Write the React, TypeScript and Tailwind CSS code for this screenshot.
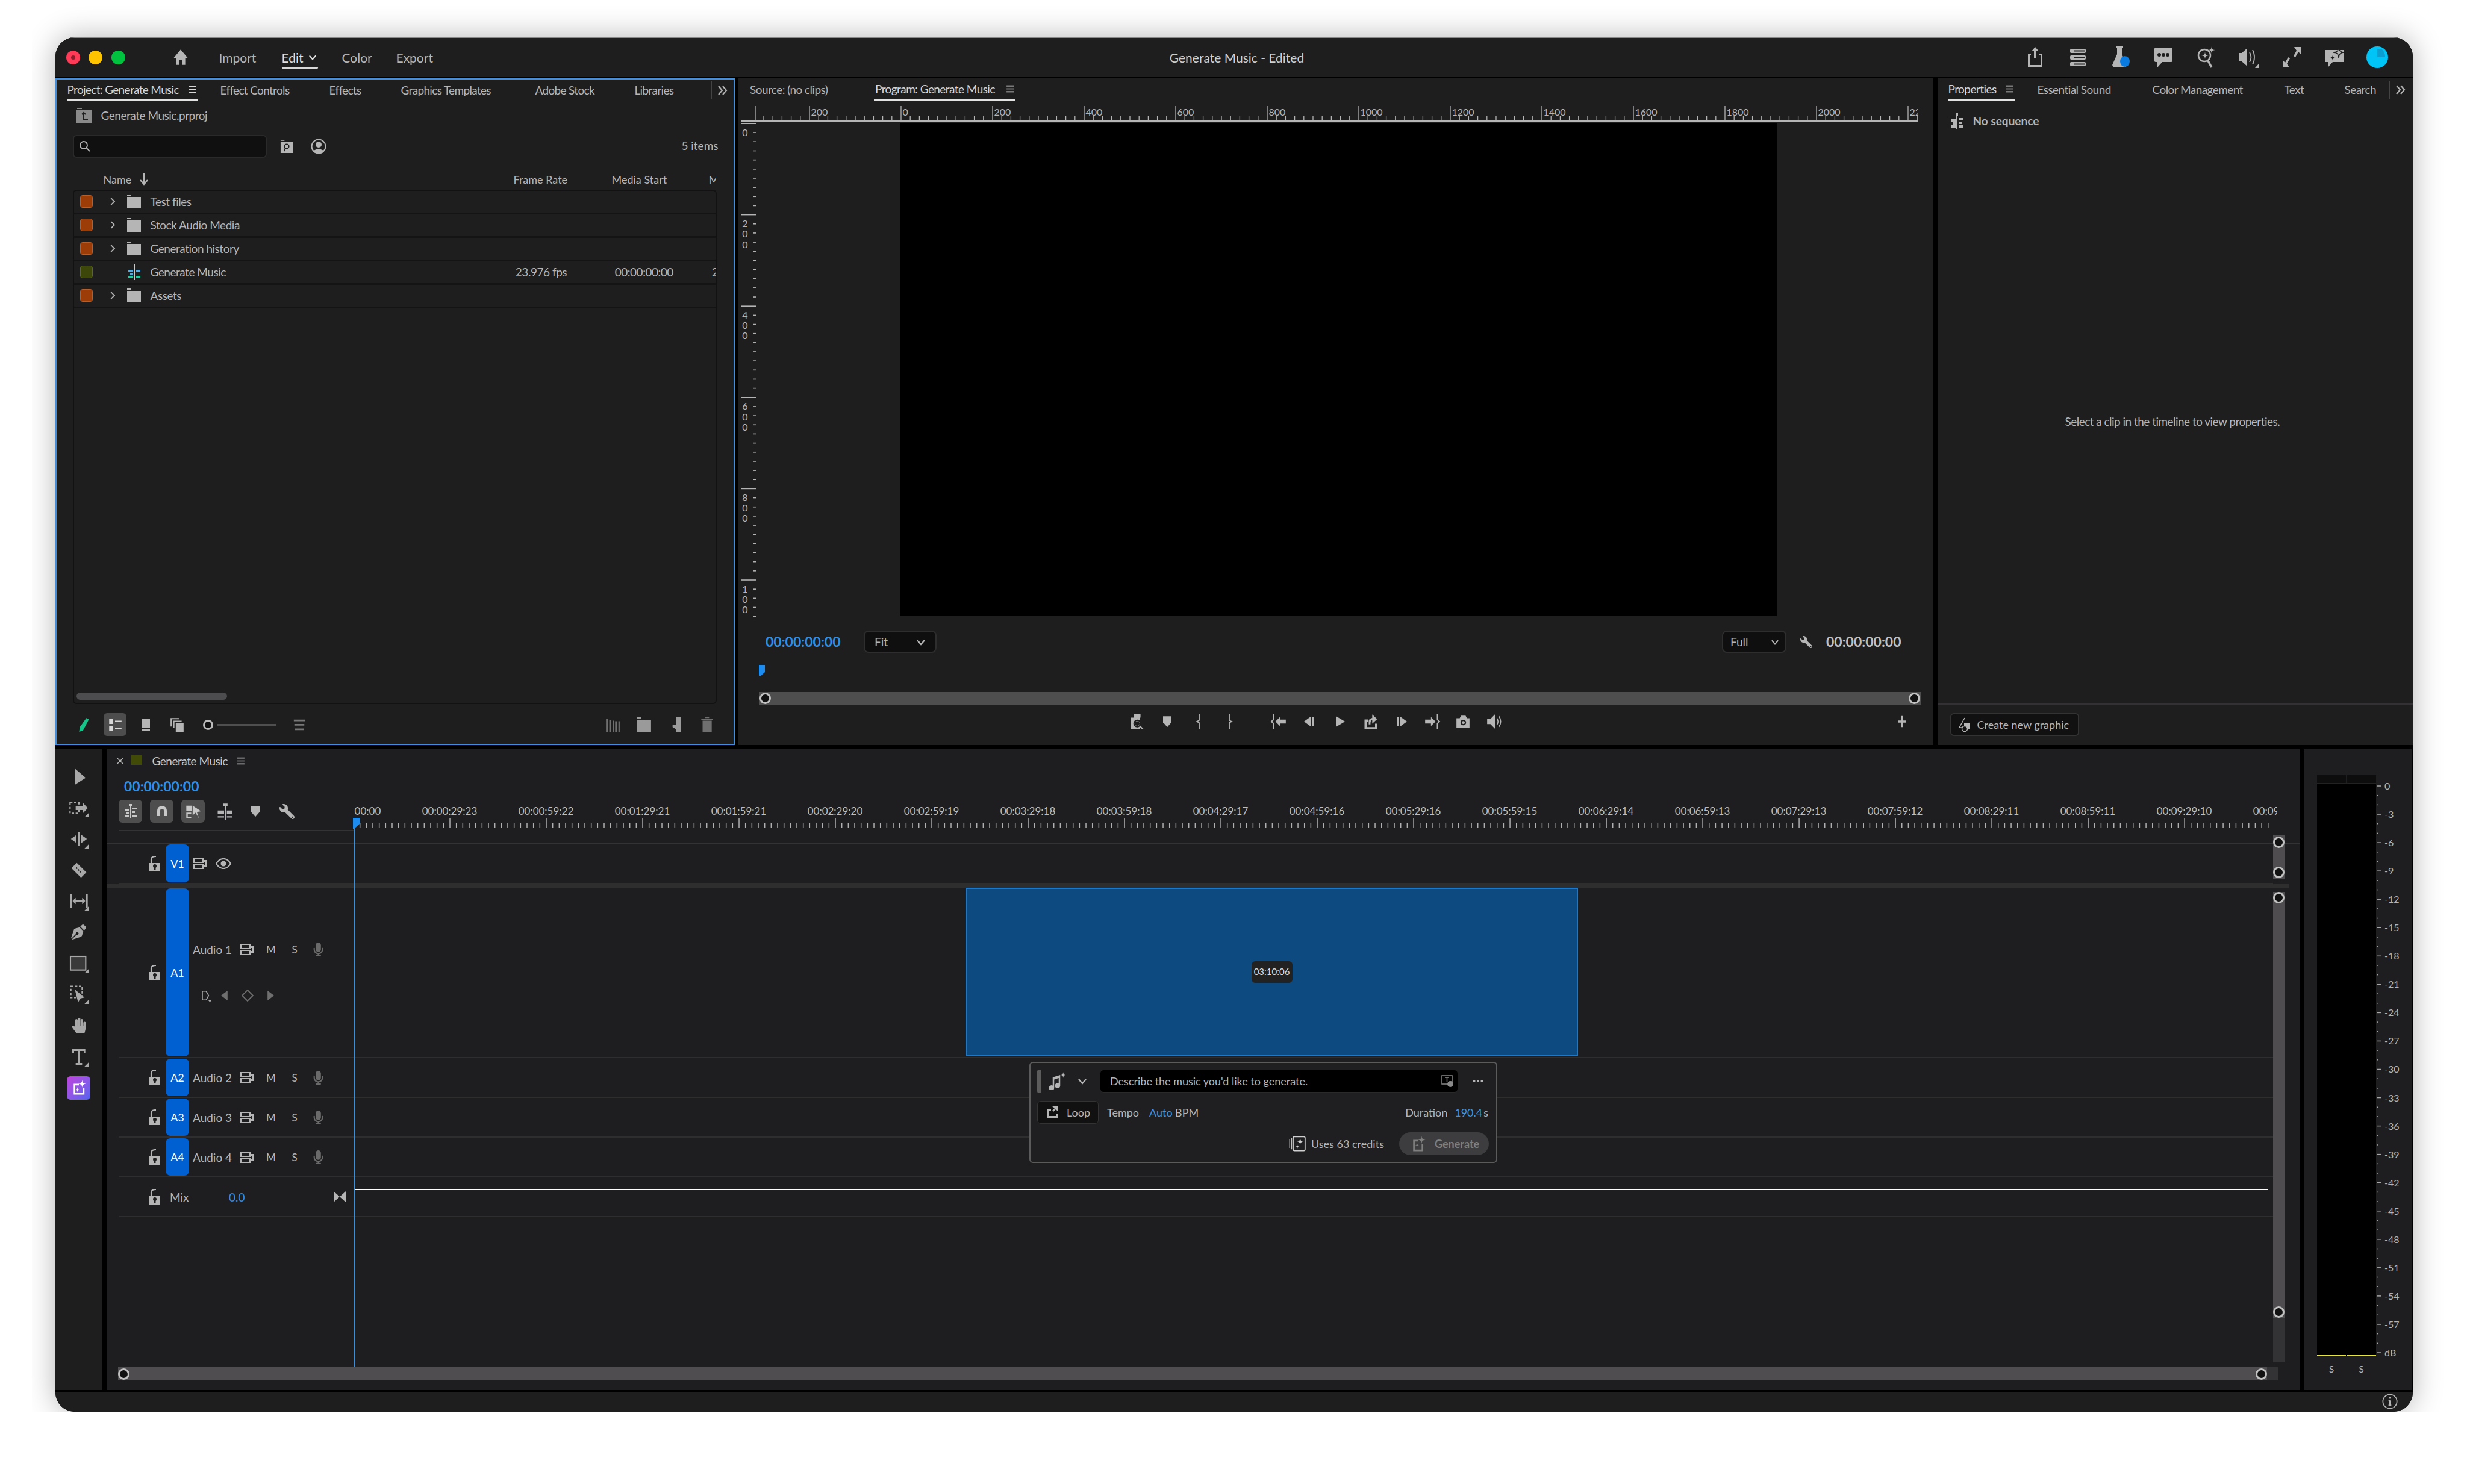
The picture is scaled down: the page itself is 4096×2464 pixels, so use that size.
import React from 'react';
import { FaHandPaper, FaWrench, FaMicrophone, FaPenNib } from 'react-icons/fa';

type P = { s?: number; h?: number; c?: string; vb?: string; children?: React.ReactNode };
const Ic = ({ s = 24, h, c = '', vb = '0 0 24 24', children }: P) => (
  <svg width={s} height={h ?? s} viewBox={vb} fill="currentColor" className={'shrink-0 ' + c}>{children}</svg>
);
const star = (x: number, y: number, r: number) => `M${x} ${y - r}Q${x} ${y} ${x + r} ${y}Q${x} ${y} ${x} ${y + r}Q${x} ${y} ${x - r} ${y}Q${x} ${y} ${x} ${y - r}Z`;
const Corner = () => <path d="M24 19v5h-5z" />;

const Menu = ({ s = 17 }: { s?: number }) => <Ic s={s}><path d="M3 4h18v2.4H3zM3 10.8h18v2.4H3zM3 17.6h18V20H3z" /></Ic>;
const Chev2 = () => <Ic s={20} vb="0 0 20 20"><path d="M3 3l6 7-6 7M10 3l6 7-6 7" fill="none" stroke="currentColor" strokeWidth="2.2" /></Ic>;
const ChevR = () => <Ic s={13} vb="0 0 12 16"><path d="M2 1l7 7-7 7" fill="none" stroke="currentColor" strokeWidth="2.2" /></Ic>;
const ChevD = ({ s = 16 }: { s?: number }) => <Ic s={s} vb="0 0 16 16"><path d="M2 5l6 7 6-7" fill="none" stroke="currentColor" strokeWidth="2.4" /></Ic>;
const Folder = () => <Ic s={23} h={24} vb="0 0 23 24"><path d="M0 0h7v2H0zM0 4h23v19H0z" /></Ic>;
const SeqIcon = () => (
  <Ic s={26} vb="0 0 26 26">
    <rect x="12" y="0" width="2" height="26" fill="#c8c8c8" />
    <rect x="3" y="9" width="8" height="4" fill="#5aa9d8" /><rect x="15" y="9" width="8" height="4" fill="#5aa9d8" />
    <rect x="6" y="14" width="5" height="4" fill="#5aa9d8" />
    <rect x="3" y="19" width="8" height="4" fill="#2ec4a0" /><rect x="15" y="19" width="8" height="4" fill="#2ec4a0" />
  </Ic>
);
const SeqGray = () => (
  <Ic s={26} vb="0 0 26 26">
    <rect x="11" y="1" width="2" height="25" /><rect x="10" y="0" width="4" height="5" />
    <rect x="2" y="10" width="8" height="4" /><rect x="15" y="8" width="8" height="4" /><rect x="5" y="15" width="5" height="4" /><rect x="15" y="14" width="5" height="4" />
    <rect x="2" y="20" width="8" height="4" /><rect x="15" y="20" width="8" height="4" />
  </Ic>
);
const Lock = () => (
  <Ic s={20} h={26} vb="0 0 20 26">
    <path d="M1 12h18v14H1z" /><path d="M4 12V6c0-4 3-5 8-5" fill="none" stroke="currentColor" strokeWidth="2.2" />
    <circle cx="10" cy="17" r="3" fill="#1e1e1f" /><rect x="8.5" y="18" width="3" height="5" fill="#1e1e1f" />
  </Ic>
);
const Sync = () => (
  <Ic s={24} h={19} vb="0 0 24 19">
    <path d="M1 1h15v7H1zM1 11h15v7H1z" fill="none" stroke="currentColor" strokeWidth="2" />
    <path d="M16 4h7v11h-7v-3h3V7h-3z" />
  </Ic>
);
const Eye = () => (
  <Ic s={26} h={18} vb="0 0 26 18">
    <path d="M1 9c3-5 7-8 12-8s9 3 12 8c-3 5-7 8-12 8S4 14 1 9z" fill="none" stroke="currentColor" strokeWidth="2.2" />
    <circle cx="13" cy="9" r="4.5" />
  </Ic>
);
const Marker = ({ s = 16 }: { s?: number }) => <Ic s={s} h={s * 1.15} vb="0 0 16 18"><path d="M1 0h14v10l-7 8-7-8z" /></Ic>;
const Toolbtn = ({ children }: { children: React.ReactNode }) => (
  <div className="w-[39px] h-[38px] rounded-md bg-[#4e4e4e] flex items-center justify-center text-[#c8c8c8]">{children}</div>
);
const SeqSmall = () => (
  <Ic s={26} vb="0 0 26 26">
    <rect x="12" y="1" width="2" height="24" /><rect x="11" y="1" width="4" height="4" />
    <rect x="3" y="9" width="8" height="3" /><rect x="15" y="7" width="8" height="3" /><rect x="6" y="14" width="5" height="3" /><rect x="15" y="13" width="5" height="3" />
    <rect x="3" y="19" width="8" height="3" /><rect x="15" y="19" width="8" height="3" />
  </Ic>
);

const Chip = ({ c }: { c: 'o' | 'g' }) => (
  <div className={c === 'o' ? 'w-[21px] h-[21px] rounded-[4px] bg-[#9c3d08] border border-[#b85f2c] shrink-0' : 'w-[21px] h-[21px] rounded-[4px] bg-[#3d470a] border border-[#5b6a1c] shrink-0'} />
);

const Ring = () => <div className="w-[19px] h-[19px] rounded-full border-[3px] border-[#c2c2c2] bg-[#121212] shrink-0" />;

const rows = [
  { n: 'Test files', c: 'o' as const, f: true },
  { n: 'Stock Audio Media', c: 'o' as const, f: true },
  { n: 'Generation history', c: 'o' as const, f: true },
  { n: 'Generate Music', c: 'g' as const, f: false },
  { n: 'Assets', c: 'o' as const, f: true },
];

function ProjectPanel() {
  return (
    <div className="w-[1128px] h-full border-2 border-[#3f8ee0] bg-[#1e1e1f] flex flex-col">
      <div className="flex h-[37px] pl-[18px] items-start shrink-0 text-[19px] leading-none tracking-[-0.035em] whitespace-nowrap">
        <div className="w-[217px] h-[36px] border-b-[3px] border-[#e2e2e2] flex items-center justify-between pr-[1px] text-[#d6d6d6]"><span>Project: Generate Music</span><Menu /></div>
        <div className="w-[37px]" />
        <div className="w-[181px] h-[36px] flex items-center">Effect Controls</div>
        <div className="w-[119px] h-[36px] flex items-center">Effects</div>
        <div className="w-[223px] h-[36px] flex items-center">Graphics Templates</div>
        <div className="w-[165px] h-[36px] flex items-center">Adobe Stock</div>
        <div className="w-[127px] h-[36px] flex items-center">Libraries</div>
        <div className="w-[1px] h-[30px] mt-[2px] bg-[#444]" />
        <div className="h-[36px] flex items-center ml-[8px]"><Chev2 /></div>
      </div>
      <div className="flex h-[47px] items-center pl-[33px] shrink-0 text-[19px] tracking-[-0.025em]">
        <Ic s={26} vb="0 0 26 26" c="text-[#8a8a8a]"><path d="M1 0h8v2H1zM0 4h26v22H0z" /><path d="M12 8v11h7M9 11l3-3 3 3" stroke="#1e1e1f" strokeWidth="2" fill="none" /></Ic>
        <span className="ml-[15px]">Generate Music.prproj</span>
      </div>
      <div className="flex h-[54px] items-center pl-[27px] pr-[25px] shrink-0 text-[19px]">
        <div className="w-[322px] h-[38px] rounded-md bg-[#101011] border-2 border-[#2a2a2a] flex items-center pl-[8px]">
          <svg width="20" height="20" viewBox="0 0 20 20" fill="none" stroke="currentColor" strokeWidth="1.8"><circle cx="8" cy="8" r="6" /><path d="M12.5 12.5L18 18" /></svg>
        </div>
        <div className="w-[22px] h-[24px] ml-[22px] flex items-center justify-center">
          <Ic s={22} vb="0 0 22 24"><path d="M0 0h7v2H0zM0 4h22v20H0z" /><circle cx="11" cy="12" r="4" fill="none" stroke="#1e1e1f" strokeWidth="2" /><path d="M8 16l-2 5" stroke="#1e1e1f" strokeWidth="2" /></Ic>
        </div>
        <div className="ml-[29px]">
          <Ic s={26} vb="0 0 26 26"><circle cx="13" cy="13" r="11.5" fill="none" stroke="currentColor" strokeWidth="2" /><circle cx="13" cy="10" r="5" /><path d="M4 22c2-6 16-6 18 0-4 4-14 4-18 0z" /></Ic>
        </div>
        <span className="ml-auto">5 items</span>
      </div>
      <div className="flex h-[45px] items-center pl-[78px] pt-[11px] shrink-0 text-[18px] leading-none">
        <div className="w-[681px] flex items-center gap-[14px]"><span>Name</span><Ic s={14} h={20} vb="0 0 14 20"><path d="M7 0v17M1 11l6 7 6-7" fill="none" stroke="currentColor" strokeWidth="2.4" /></Ic></div>
        <div className="w-[163px]">Frame Rate</div>
        <div className="w-[161px]">Media Start</div>
        <div className="w-[12px] overflow-hidden">Media</div>
      </div>
      <div className="ml-[27px] mr-[28px] h-[854px] border-2 border-[#121213] rounded-md flex flex-col shrink-0 overflow-hidden text-[19px] leading-none">
        {rows.map((r) => (
          <div key={r.n} className="h-[39px] shrink-0 border-b-[3px] border-[#141415] flex items-center pl-[10px]">
            <Chip c={r.c} />
            <div className="w-[57px] pl-[27px] flex items-center">{r.f && <ChevR />}</div>
            <div className="w-[39px] flex items-center">{r.f ? <Folder /> : <SeqIcon />}</div>
            <span className="w-[607px] tracking-[-0.025em]">{r.n}</span>
            {!r.f && <><span className="w-[165px] tracking-[-0.025em]">23.976 fps</span><span className="w-[161px] tracking-[-0.025em]">00:00:00:00</span><span className="w-[6px] overflow-hidden">2</span></>}
          </div>
        ))}
        <div className="flex-1" />
        <div className="ml-[4px] mb-[5px] w-[250px] h-[12px] rounded-md bg-[#4d4c4e]" />
      </div>
      <div className="flex flex-1 items-center pl-[19px] pr-[19px] pt-[3px]">
        <div className="w-[52px] flex justify-center text-[#16c388]"><Ic s={26}><path d="M16 2l4 2-9 17-6 2 1-7z" /></Ic></div>
        <div className="w-[52px] flex justify-center"><div className="w-[38px] h-[38px] rounded-md bg-[#4e4d4e] flex items-center justify-center text-[#d8d8d8]"><Ic s={26}><path d="M3 3h6v8H3zM3 14h6v8H3zM12 6h10v2H12zM12 17h10v2H12z" /></Ic></div></div>
        <div className="w-[51px] flex justify-center"><Ic s={24}><path d="M5 2h14v15H5zM5 20h14v2H5z" /></Ic></div>
        <div className="w-[52px] flex justify-center"><Ic s={26}><path d="M2 2h13v2H4v11H2zM6 6h13v2H8v9H6zM10 10h12v13H10z" /></Ic></div>
        <div className="w-[17px] h-[17px] ml-[17px] rounded-full border-[3px] border-[#bdbdbd] bg-[#111] shrink-0" />
        <div className="w-[98px] h-[3px] ml-[6px] bg-[#4f4f4f]" />
        <div className="ml-[28px] text-[#777]"><Ic s={22}><path d="M2 3h20v3H2zM3 11h18v3H3zM4 19h16v3H4z" /></Ic></div>
        <div className="ml-auto flex text-[#6f6f6f]">
          <div className="w-[52px] flex justify-center"><Ic s={26}><path d="M2 3h3v20H2zM7 5h3v18H7zM12 6h2v17h-2zM16 7h3v16h-3zM21 7h2v16h-2z" /></Ic></div>
          <div className="w-[52px] flex justify-center text-[#9a9a9a]"><Ic s={26}><path d="M1 0h7v3H1zM1 5h22v20H1z" /></Ic></div>
          <div className="w-[52px] flex justify-center text-[#9a9a9a]"><Ic s={26}><path d="M8 1h13v24h-8v-6l-5-3V13h5V1z" /></Ic></div>
          <div className="w-[52px] flex justify-center"><Ic s={26}><path d="M6 6h14v19H6zM4 3h18v2H4zM10 0h6v2h-6z" /></Ic></div>
        </div>
      </div>
    </div>
  );
}

const hTicks = Array.from({ length: 127 }, (_, i) => 38 + 15.2 * i).filter((x) => x <= 1955);
const hLabels: [string, number][] = [['200', 114], ...Array.from({ length: 11 }, (_, i): [string, number] => [String(i * 200), 266 + i * 152]), ['22', 1938]];
const vLabels = ['0', '200', '400', '600', '800', '100'];

function ProgramPanel() {
  return (
    <div className="w-[1984px] h-full bg-[#1e1e1f] flex flex-col ml-[6.5px]">
      <div className="flex h-[41px] pl-[19px] items-start shrink-0 text-[19px] leading-none tracking-[-0.03em] whitespace-nowrap">
        <div className="w-[206px] h-[38px] flex items-center">Source: (no clips)</div>
        <div className="w-[235px] h-[38px] border-b-[3px] border-[#e2e2e2] flex items-center justify-between pl-[2px] text-[#d6d6d6]"><span>Program: Generate Music</span><Menu /></div>
      </div>
      <div className="relative h-[34px] ml-[4.4px] w-[1955px] shrink-0 overflow-hidden">
        <svg width="1955" height="34" className="absolute inset-0" stroke="#b5b5b5" strokeWidth="1.3">
          <line x1="0" x2="1955" y1="30" y2="30" strokeWidth="2" />
          <line x1="25" x2="25" y1="5" y2="30" />
          {hTicks.map((x, i) => <line key={i} x1={x} x2={x} y1={(Math.abs(x - 114) < 1 || (x >= 266 && Math.round((x - 266) / 15.2) % 10 === 0)) ? 5 : 22} y2="30" />)}
        </svg>
        {hLabels.map(([t, x], i) => (
          <span key={i} className="absolute top-[7px] text-[16px] leading-none" style={{ left: x + 2 }}>{t}</span>
        ))}
      </div>
      <div className="flex h-[826px] shrink-0 ml-[4.4px] overflow-hidden">
        <div className="relative w-[26px] h-full shrink-0">
          <svg width="26" height="826" className="absolute inset-0" stroke="#b5b5b5" strokeWidth="1.6">
            <line x1="0" x2="26" y1="0" y2="0" strokeWidth="2" />
            {Array.from({ length: 55 }, (_, i) => <line key={i} x1={i % 10 === 0 ? 0 : 21} x2="26" y1={i * 15.16} y2={i * 15.16} />)}
          </svg>
          {vLabels.map((t, i) => (
            <div key={i} className="absolute left-[0px] flex flex-col text-[16px] leading-[17.3px] w-[13px] items-center" style={{ top: 6 + i * 151.6 }}>
              {t.split('').map((d, j) => <span key={j}>{d}</span>)}
            </div>
          ))}
        </div>
        <div className="w-[238.6px] shrink-0" />
        <div className="w-[1456px] h-[817px] bg-black shrink-0" />
      </div>
      <div className="flex h-[70px] items-center shrink-0 pl-[45px] pr-[54px] text-[19px] leading-none">
        <span className="w-[124px] text-[#2f8fe6] font-bold text-[23px] whitespace-nowrap">00:00:00:00</span>
        <div className="ml-[39px] w-[121px] h-[37px] rounded-lg bg-[#0f0f10] border-2 border-[#2e2e2e] flex items-center justify-between pl-[16px] pr-[16px]"><span>Fit</span><ChevD /></div>
        <div className="ml-auto w-[107px] h-[37px] rounded-lg bg-[#0f0f10] border-2 border-[#2e2e2e] flex items-center justify-between pl-[12px] pr-[10px]"><span>Full</span><ChevD s={14} /></div>
        <div className="w-[66px] flex justify-center"><FaWrench size={20} className="-scale-x-100" /></div>
        <span className="w-[124px] font-bold text-[23px] text-[#c0c0c0] whitespace-nowrap">00:00:00:00</span>
      </div>
      <div className="h-[48px] pl-[34px] pt-[3px] shrink-0">
        <Ic s={10} h={19} vb="0 0 10 19" c="text-[#1c8cf0]"><path d="M0 0h10v12l-8 7-2-3z" /></Ic>
      </div>
      <div className="ml-[34px] w-[1929px] h-[21px] bg-[#4f4e4f] flex items-center justify-between shrink-0 px-[1px]"><Ring /><Ring /></div>
      <div className="flex flex-1 items-center pl-[634px] pr-[26px] pb-[10px] text-[#b5b5b5]">
        <div className="w-[52px] flex justify-center"><Ic s={26}><path d="M9 1h10v5H9zM4 6h14v18H4z" /><circle cx="14" cy="15" r="5" fill="#b5b5b5" stroke="#1e1e1f" strokeWidth="2" /><circle cx="14" cy="15" r="3.5" fill="#1e1e1f" /><path d="M18 19l5 5" stroke="#b5b5b5" strokeWidth="2" /></Ic></div>
        <div className="w-[52px] flex justify-center"><Marker /></div>
        <div className="w-[52px] flex justify-center"><Ic s={14} h={26} vb="0 0 14 26"><path d="M8 1v10l-4 2 4 2v10" fill="none" stroke="currentColor" strokeWidth="1.8" /></Ic></div>
        <div className="w-[52px] flex justify-center"><Ic s={14} h={26} vb="0 0 14 26"><path d="M6 1v10l4 2-4 2v10" fill="none" stroke="currentColor" strokeWidth="1.8" /></Ic></div>
        <div className="w-[29px]" />
        <div className="w-[51px] flex justify-center"><Ic s={28} vb="0 0 26 26"><path d="M5 1v9l-3 3 3 3v9" fill="none" stroke="currentColor" strokeWidth="2" /><path d="M8 13l7-7v4h9v6h-9v4z" /></Ic></div>
        <div className="w-[51px] flex justify-center"><Ic s={24}><path d="M3 12l11-8v16zM17 4h3v16h-3z" /></Ic></div>
        <div className="w-[51px] flex justify-center"><Ic s={24}><path d="M5 3l15 9-15 9z" /></Ic></div>
        <div className="w-[51px] flex justify-center"><Ic s={28}><path d="M3 9h5v3H6v8h12v-5h3v8H3z" /><path d="M9 16v-4c0-3 2-5 5-5V2l7 6.500-7 6.500v-5c-2 0-2.500 2-2.500 6z" /></Ic></div>
        <div className="w-[51px] flex justify-center"><Ic s={24}><path d="M4 4h3v16H4zM10 4l11 8-11 8z" /></Ic></div>
        <div className="w-[51px] flex justify-center"><Ic s={28} vb="0 0 26 26"><g transform="matrix(-1 0 0 1 26 0)"><path d="M5 1v9l-3 3 3 3v9" fill="none" stroke="currentColor" strokeWidth="2" /><path d="M8 13l7-7v4h9v6h-9v4z" /></g></Ic></div>
        <div className="w-[51px] flex justify-center"><Ic s={26}><path d="M2 7h5l2-4h7l2 4h4v15H2z" /><circle cx="12.500" cy="13.500" r="3.300" fill="none" stroke="#1e1e1f" strokeWidth="2" /></Ic></div>
        <div className="w-[51px] flex justify-center"><Ic s={26}><path d="M2 8h5l7-7v22l-7-7H2z" /><path d="M17 7c2 3 2 7 0 10M20 4c3.500 5 3.500 11 0 16" fill="none" stroke="currentColor" strokeWidth="1.500" /></Ic></div>
        <div className="ml-auto w-[52px] flex justify-center"><Ic s={22}><path d="M10.5 2h3v8h6v4h-6v8h-3v-8h-6v-4h6z" /></Ic></div>
      </div>
    </div>
  );
}

function PropertiesPanel() {
  return (
    <div className="w-[789px] h-full bg-[#1e1e1f] flex flex-col ml-[6.5px]">
      <div className="flex h-[41px] pl-[18px] items-start shrink-0 text-[19px] leading-none tracking-[-0.03em] whitespace-nowrap">
        <div className="w-[110px] h-[38px] border-b-[3px] border-[#e2e2e2] flex items-center justify-between text-[#d6d6d6]"><span>Properties</span><Menu /></div>
        <div className="w-[38px]" />
        <div className="w-[191px] h-[38px] flex items-center">Essential Sound</div>
        <div className="w-[219px] h-[38px] flex items-center">Color Management</div>
        <div className="w-[100px] h-[38px] flex items-center">Text</div>
        <div className="w-[74px] h-[38px] flex items-center">Search</div>
        <div className="w-[1px] h-[30px] mt-[4px] bg-[#444]" />
        <div className="h-[38px] flex items-center ml-[8px]"><Chev2 /></div>
      </div>
      <div className="h-[61px] flex items-center pl-[20px] shrink-0 text-[19px] font-bold"><SeqGray /><span className="ml-[13px]">No sequence</span></div>
      <div className="flex-1 flex items-center pl-[212px] text-[19px] leading-none tracking-[-0.028em]"><span>Select a clip in the timeline to view properties.</span></div>
      <div className="h-[69px] border-t-2 border-[#333134] flex items-start pl-[21px] pt-[14px] shrink-0">
        <div className="w-[214px] h-[38px] rounded-md bg-[#111112] border-2 border-[#333] flex items-center pl-[10px] text-[18px] leading-none">
          <Ic s={24} vb="0 0 24 24"><path d="M12 1L3 17h9" fill="none" stroke="currentColor" strokeWidth="1.5" /><rect x="11" y="9" width="9" height="10" /><circle cx="12" cy="19" r="4.5" fill="#111" stroke="currentColor" strokeWidth="1.5" /></Ic>
          <span className="ml-[9px]">Create new graphic</span>
        </div>
      </div>
    </div>
  );
}

const Sl = ({ children }: { children: React.ReactNode }) => <div className="h-[51.7px] w-full flex items-center justify-center shrink-0">{children}</div>;

function Tools() {
  return (
    <div className="w-[78.5px] h-full bg-[#1e1e1f] pt-[20.6px] flex flex-col items-center text-[#a8a8a8] shrink-0">
      <Sl><Ic s={30}><path d="M7 2l14 12-14 9z" /></Ic></Sl>
      <Sl><Ic s={32}><rect x="1" y="6" width="11" height="13" fill="none" stroke="currentColor" strokeWidth="1.6" strokeDasharray="3 2" /><path d="M8 10h9V6l6 6.5-6 6.5v-4H8z" /><Corner /></Ic></Sl>
      <Sl><Ic s={32}><path d="M11 3h2v18h-2zM9 7v10l-7-5zM15 7v10l7-5z" /><Corner /></Ic></Sl>
      <Sl><Ic s={30}><g transform="rotate(45 12 12)"><rect x="3" y="7" width="18" height="10" /><path d="M7 12h10" stroke="#1e1e1f" strokeWidth="1.6" strokeDasharray="2 1.4" /></g></Ic></Sl>
      <Sl><Ic s={32}><path d="M1 3h2v18H1zM21 3h2v18h-2zM8 8v3h8V8l4 4-4 4v-3H8v3l-4-4z" /><Corner /></Ic></Sl>
      <Sl><FaPenNib size={25} /></Sl>
      <Sl><Ic s={32}><rect x="1.5" y="3" width="19" height="17" fill="#3a3a3a" stroke="currentColor" strokeWidth="1.6" /><Corner /></Ic></Sl>
      <Sl><Ic s={32}><rect x="2" y="2" width="14" height="14" fill="none" stroke="currentColor" strokeWidth="1.6" strokeDasharray="3 2" /><path d="M7 6l12 10-5 1-3 5z" /><Corner /></Ic></Sl>
      <Sl><FaHandPaper size={26} /></Sl>
      <Sl><Ic s={32}><path d="M3 2h17v5h-2V4.5h-5v15h3V22H8v-2.500h3v-15H6V7H3z" /><Corner /></Ic></Sl>
      <Sl>
        <div className="w-[39px] h-[39px] rounded-md bg-gradient-to-br from-[#bf3fdc] to-[#4f62f0] flex items-center justify-center text-white">
          <Ic s={26}><path d="M4 6h8v2.500H6.500V20H18v-7h2.500v9.500H4z" /><path d={star(17, 6, 6)} /><path d={star(10, 15, 4)} /></Ic>
        </div>
      </Sl>
    </div>
  );
}

const tlLabels = ['00:00:00:00', '00:00:29:23', '00:00:59:22', '00:01:29:21', '00:01:59:21', '00:02:29:20', '00:02:59:19', '00:03:29:18', '00:03:59:18', '00:04:29:17', '00:04:59:16', '00:05:29:16', '00:05:59:15', '00:06:29:14', '00:06:59:13', '00:07:29:13', '00:07:59:12', '00:08:29:11', '00:08:59:11', '00:09:29:10', '00:09:59:09'];

const AudioCtl = () => (
  <>
    <div className="w-[39px] flex justify-center text-[#b5b5b5]"><Sync /></div>
    <div className="w-[39px] flex justify-center text-[17px]">M</div>
    <div className="w-[39px] flex justify-center text-[17px]">S</div>
    <div className="w-[39px] flex justify-center text-[#6a6a6a]"><FaMicrophone size={23} /></div>
  </>
);
const Badge = ({ t }: { t: string }) => (
  <div className="w-[39px] ml-[10px] my-[1px] rounded-lg bg-[#0060d1] text-white text-[18px] flex items-center justify-center shrink-0">{t}</div>
);
const Head = ({ children }: { children: React.ReactNode }) => (
  <div className="w-[389.5px] ml-[20.5px] shrink-0 flex items-stretch border-b-2 border-[#2e2e2e]">
    <div className="w-[52px] shrink-0" />
    <div className="w-[16px] flex items-center justify-center shrink-0"><Lock /></div>
    {children}
  </div>
);
const Row = ({ c, children, lane }: { c: string; children: React.ReactNode; lane?: React.ReactNode }) => (
  <div className={'flex shrink-0 ' + c}>
    <Head>{children}</Head>
    <div className="flex-1 border-b-2 border-[#2e2e2e]">{lane}</div>
  </div>
);
const AudioRow = ({ t, n }: { t: string; n: string }) => (
  <Row c="h-[66px]">
    <Badge t={t} />
    <div className="w-[77.5px] pl-[6px] flex items-center shrink-0 text-[19px] whitespace-nowrap">{n}</div>
    <div className="flex items-center"><AudioCtl /></div>
  </Row>
);

function Timeline() {
  return (
    <div className="relative w-[3642.5px] h-full bg-[#1e1e20] ml-[6.5px] flex flex-col text-[19px] leading-none shrink-0 overflow-hidden">
      <div className="flex h-[41px] items-center pl-[17px] shrink-0">
        <Ic s={11} vb="0 0 12 12"><path d="M1 1l10 10M11 1L1 11" stroke="currentColor" strokeWidth="1.6" /></Ic>
        <div className="w-[18px] h-[17px] bg-[#414a06] ml-[13px] -mt-[5px]" />
        <span className="ml-[17px] text-[19px] w-[128px] whitespace-nowrap text-[#c8c8c8] tracking-[-0.025em]">Generate Music</span>
        <div className="ml-[10px]"><Menu /></div>
      </div>
      <div className="h-[42px] pl-[29.5px] flex items-center text-[#2f8fe6] font-bold text-[23px] shrink-0">00:00:00:00</div>
      <div className="flex h-[73px] shrink-0">
        <div className="w-[410px] shrink-0 pl-[20.5px] pt-[2px]">
          <div className="flex items-center h-[38px] border-0">
            <Toolbtn><SeqSmall /></Toolbtn>
            <div className="ml-[13px]"><Toolbtn><Ic s={24}><path d="M4 20V11a8 8 0 0116 0v9h-5v-9a3 3 0 00-6 0v9z" /></Ic></Toolbtn></div>
            <div className="ml-[13px]"><Toolbtn><Ic s={28}><path d="M2 4h8v8H2zM2 14h2v8H2zM2 14h7v2H2zM2 20h7v2H2zM11 4l12 8-6 1 3 9-5-8-4 4z" /></Ic></Toolbtn></div>
            <div className="w-[52px] ml-[6px] flex justify-center"><Ic s={28}><path d="M13 2h2v24h-2zM11 1h6v4h-6zM3 11h9v5H3zM16 11h9v5h-9zM3 19h9v2H3zM16 19h9v2h-9z" /></Ic></div>
            <div className="w-[52px] flex justify-center"><Marker /></div>
            <div className="w-[52px] flex justify-center"><FaWrench size={25} className="-scale-x-100" /></div>
          </div>
          <div className="h-[2px] bg-[#333] mt-[12px]" />
        </div>
        <div className="relative w-[3194.500px] h-full overflow-hidden shrink-0">
          {tlLabels.map((t, i) => (
            <span key={t} className="absolute top-[12px] text-[17px] w-[120px] text-center leading-none text-[#bdbdbd]" style={{ left: i * 160 - 60 }}>{t}</span>
          ))}
          <svg width="3187" height="73" className="absolute inset-0" stroke="#b0b0b0" strokeWidth="1.5">
            {Array.from({ length: 300 }, (_, i) => <line key={i} x1={i * 10.667} x2={i * 10.667} y1={i % 15 === 0 ? 32 : 41} y2="49" />)}
          </svg>
        </div>
      </div>
      <div className="h-[2px] bg-[#333] shrink-0" />
      <div className="flex-1 pr-[45px] flex flex-col min-h-0">
        <Row c="h-[67px]">
          <Badge t="V1" />
          <div className="w-[38px] flex items-center justify-center text-[#b5b5b5]"><Sync /></div>
          <div className="w-[38px] flex items-center justify-center"><Eye /></div>
        </Row>
        <div className="h-[6px] bg-[#2e2e2e] -mr-[26px] ml-0 shrink-0" />
        <Row c="h-[283px]" lane={
          <div className="relative ml-[1017px] w-[1016px] h-[279px] bg-[#0d4a80] border-2 border-[#1d78c9] flex items-center justify-center">
            <div className="w-[68px] h-[36px] rounded-md bg-[#222] text-[#dcdcdc] text-[15px] flex items-center justify-center">03:10:06</div>
          </div>
        }>
          <Badge t="A1" />
          <div className="flex flex-col justify-center">
            <div className="h-[77px] flex items-center">
              <div className="w-[77.5px] pl-[6px] text-[19px] whitespace-nowrap">Audio 1</div>
              <AudioCtl />
            </div>
            <div className="h-[77px] flex items-center">
              <div className="w-[38px] flex justify-end text-[#a8a8a8]"><Ic s={24}><path d="M7 3h8l5 9-5 9H7z" transform="scale(.8) translate(3 3)" fill="none" stroke="currentColor" strokeWidth="2" /><path d="M18 20l5 0-2.500 3z" /></Ic></div>
              <div className="w-[39.500px]" />
              <div className="w-[39px] -ml-[39px] flex justify-center text-[#6f6f6f]"><Ic s={20}><path d="M19 2v20L6 12z" /></Ic></div>
              <div className="w-[39px] flex justify-center text-[#6f6f6f]"><Ic s={24}><path d="M12 3l9 9-9 9-9-9z" fill="none" stroke="currentColor" strokeWidth="1.8" /></Ic></div>
              <div className="w-[39px] flex justify-center text-[#6f6f6f]"><Ic s={20}><path d="M5 2v20l13-10z" /></Ic></div>
            </div>
          </div>
        </Row>
        <AudioRow t="A2" n="Audio 2" />
        <AudioRow t="A3" n="Audio 3" />
        <AudioRow t="A4" n="Audio 4" />
        <Row c="h-[66px]" lane={<div className="w-[3179px] h-[2px] bg-white mt-[19px]" />}>
          <span className="ml-[17px] w-[98px] self-center text-[19px]">Mix</span>
          <span className="w-[172px] self-center text-[#2f8fe6] text-[19px]">0.0</span>
          <div className="self-center"><Ic s={24}><path d="M2 3l10 9-10 9zM22 3L12 12l10 9z" /></Ic></div>
        </Row>
        <div className="flex-1" />
        <div className="flex ml-[19.5px] -mr-[8px] shrink-0">
          <div className="flex-1 h-[22px] bg-[#4f4d50] flex items-center justify-between"><Ring /><Ring /></div>
          <div className="w-[18px] h-[22px] bg-[#333235]" />
        </div>
        <div className="h-[16px] shrink-0" />
      </div>
      {/* playhead */}
      <div className="absolute left-[410px] top-[115px] bottom-[38px] w-[2px] bg-[#3a8fdc]" />
      <div className="absolute left-[409.500px] top-[115px] text-[#1c8cf0]"><Ic s={11} h={18} vb="0 0 11 18"><path d="M0 0h11v10l-9 8H0z" /></Ic></div>
      {/* vertical scroll bars */}
      <div className="absolute left-[3597.500px] top-[144px] w-[19px] h-[73px] bg-[#4f4d50] flex flex-col justify-between items-center py-[2px]"><Ring /><Ring /></div>
      <div className="absolute left-[3597.500px] top-[238px] w-[19px] h-[707px] bg-[#4f4d50] flex flex-col items-center">
        <Ring /><div className="flex-1" /><Ring />
      </div>
      <div className="absolute left-[3597.500px] top-[945px] w-[19px] h-[74px] bg-[#333235]" />
      {/* music popup */}
      <div className="absolute left-[1532.500px] top-[520px] w-[777px] h-[168px] rounded-md bg-[#1f1e20] border-2 border-[#5b5b5b] flex flex-col pl-[11px] pr-[11px] pt-[11px] text-[18px] leading-none">
        <div className="flex items-center h-[38px]">
          <div className="w-[7px] h-[39px] rounded bg-[#5c5c5c] shrink-0" />
          <div className="w-[50px] flex justify-center shrink-0"><Ic s={30}><path d="M7 7l10-3v14a3.500 3.500 0 11-2-3V8l-6 2v11a3.500 3.500 0 11-2-3z" /><path d={star(21, 4, 4)} /></Ic></div>
          <div className="w-[47px] flex justify-start pl-[10px] shrink-0"><ChevD /></div>
          <div className="w-[595px] h-[38px] rounded-md bg-black border border-[#2a2a2a] flex items-center pl-[16px] pr-[5px] justify-between shrink-0">
            <span>Describe the music you'd like to generate.</span>
            <Ic s={24} c="text-[#8a8a8a]"><path d="M3 3h17v14H3z" fill="none" stroke="currentColor" strokeWidth="1.500" /><path d="M8 6h7M11.500 6v8" stroke="currentColor" strokeWidth="1.500" /><circle cx="17" cy="17" r="5" /></Ic>
          </div>
          <div className="w-[66px] flex justify-center text-[#b5b5b5] shrink-0"><Ic s={22}><circle cx="5" cy="12" r="2.200" /><circle cx="12" cy="12" r="2.200" /><circle cx="19" cy="12" r="2.200" /></Ic></div>
        </div>
        <div className="flex items-center h-[38px] mt-[14px]">
          <div className="w-[102px] h-[38px] rounded-md bg-[#111112] border border-[#333] flex items-center pl-[12px] gap-[12px] shrink-0">
            <Ic s={24}><path d="M3 6v15h18v-7h-3v4H6V9h4V6z" /><path d="M12 2h9v8l-3-3-4 4-2-2 4-4z" /></Ic>
            <span>Loop</span>
          </div>
          <span className="ml-[14px] w-[70px]">Tempo</span>
          <span className="text-[#3a94e4] w-[43px]">Auto</span>
          <span>BPM</span>
          <span className="ml-auto w-[82px]">Duration</span>
          <span className="text-[#3a94e4] w-[48px]">190.4</span>
          <span className="mr-[2px]">s</span>
        </div>
        <div className="flex items-center justify-end h-[38px] mt-[14px] pr-[1px]">
          <Ic s={28} c="text-[#d0d0d0]"><path d="M1 6v12M4 4v16" stroke="currentColor" strokeWidth="1" /><rect x="6" y="2" width="17" height="20" rx="2" fill="none" stroke="currentColor" strokeWidth="1.500" /><path d={star(16, 9, 5)} /><path d={star(12, 16, 3)} /></Ic>
          <span className="ml-[9px] w-[146px]">Uses 63 credits</span>
          <div className="w-[149px] h-[38px] rounded-full bg-[#3d3c3e] flex items-center pl-[20px] gap-[13px] text-[#7f7f7f] font-bold">
            <Ic s={26}><path d="M3 6h8v2.500H5.500V21H16v-8h2.500v10.500H3z" /><path d={star(16, 6, 6)} /><path d={star(9, 14, 3)} /></Ic>
            <span>Generate</span>
          </div>
        </div>
      </div>
    </div>
  );
}

const dbs = ['0', '-3', '-6', '-9', '-12', '-15', '-18', '-21', '-24', '-27', '-30', '-33', '-36', '-39', '-42', '-45', '-48', '-51', '-54', '-57', 'dB'];

function Meters() {
  return (
    <div className="w-[179px] h-full bg-[#1e1e20] ml-[6.5px] flex flex-col pl-[21px] pt-[38.500px] shrink-0 text-[16px] leading-none">
      <div className="flex">
        <div className="flex flex-col mt-[5.500px] w-[98.600px] h-[964px] shrink-0">
          <div className="h-[13px] flex gap-[2px] shrink-0">
            <div className="flex-1 bg-[#0d0d0d]" /><div className="flex-1 bg-[#0d0d0d]" />
          </div>
          <div className="flex-1 bg-black border-t border-[#222] flex items-end gap-[2px]">
            <div className="flex-1 h-[2px] bg-[#e6e63c]" /><div className="flex-1 h-[2px] bg-[#e6e63c]" />
          </div>
        </div>
        <div className="mt-[5.500px] w-[8px] shrink-0">
          <svg width="8" height="964" stroke="#a8a8a8" strokeWidth="1.500">
            {Array.from({ length: 61 }, (_, i) => {
              const y = 18 + (i * 941) / 60;
              return <line key={i} x1="1" x2={i % 3 === 0 ? 8 : 4} y1={y} y2={y} />;
            })}
          </svg>
        </div>
        <div className="ml-[6px] flex flex-col shrink-0">
          {dbs.map((d) => <div key={d} className="h-[47.050px] flex items-center shrink-0">{d}</div>)}
        </div>
      </div>
      <div className="flex -mt-[3px] w-[98.600px]">
        <div className="flex-1 text-center text-[15px]">S</div><div className="flex-1 text-center text-[15px]">S</div>
      </div>
    </div>
  );
}

const topIcons = [
  <svg key="a" width="30" height="36" viewBox="0 0 30 36" fill="currentColor"><path d="M8 12H3v22h24V12h-5v3h2v16H6V15h2z" /><path d="M13 20V8H9l6-7 6 7h-4v12z" /></svg>,
  <svg key="b" width="30" height="32" viewBox="0 0 30 32" fill="currentColor"><rect x="2" y="2" width="26" height="7" rx="2" /><rect x="2" y="13" width="26" height="7" rx="2" /><rect x="2" y="24" width="26" height="7" rx="2" /><rect x="9" y="4.500" width="17" height="2" fill="#1e1e1f" /><rect x="9" y="15.500" width="17" height="2" fill="#1e1e1f" /><rect x="9" y="26.500" width="17" height="2" fill="#1e1e1f" /></svg>,
  <svg key="c" width="34" height="38" viewBox="0 0 34 38" fill="currentColor"><path d="M9 1h12v3h-2v10l8 18-2 4H5l-2-4 8-18V4H9z" /><ellipse cx="24" cy="26" rx="8" ry="9" fill="#0a7be0" /></svg>,
  <svg key="d" width="32" height="36" viewBox="0 0 32 36" fill="currentColor"><path d="M3 2h26a2 2 0 012 2v20a2 2 0 01-2 2H14l-8 9v-9H3a2 2 0 01-2-2V4a2 2 0 012-2z" /><circle cx="9" cy="14" r="3" fill="#1e1e1f" /><circle cx="16" cy="14" r="3" fill="#1e1e1f" /><circle cx="23" cy="14" r="3" fill="#1e1e1f" /></svg>,
  <svg key="e" width="32" height="36" viewBox="0 0 32 36" fill="currentColor"><circle cx="13" cy="15" r="10" fill="none" stroke="currentColor" strokeWidth="2.500" /><path d="M19 24l6 11" stroke="currentColor" strokeWidth="3.500" /><path d={star(14, 15, 6)} /><path d={star(25, 6, 6)} /></svg>,
  <svg key="f" width="38" height="36" viewBox="0 0 38 36" fill="currentColor"><path d="M2 11h5l9-8v30l-9-8H2z" /><path d="M20 10c3 5 3 11 0 16M25 6c4 7 4 17 0 24" fill="none" stroke="currentColor" strokeWidth="1.800" /><path d="M36 28v8h-7z" /></svg>,
  <svg key="g" width="32" height="36" viewBox="0 0 32 36" fill="currentColor"><path d="M20 1h11v12l-4-4-5 9-3-2 5-9zM12 35H1V23l4 4 5-9 3 2-5 9z" /></svg>,
  <svg key="h" width="34" height="36" viewBox="0 0 34 36" fill="currentColor"><path d="M2 6h30v20H14l-8 9v-9H2z" /><path d={star(24, 10, 9)} stroke="#1e1e1f" strokeWidth="1.500" /><path d={star(14, 19, 5)} fill="#1e1e1f" /></svg>,
];

export default function App() {
  return (
    <div className="w-[4096px] h-[2464px] bg-white overflow-hidden font-[family-name:Lato,sans-serif] text-[#b5b5b5]">
      <div className="ml-[53px] w-[4043px] h-[2344px] pl-[38.500px] pt-[61.500px] overflow-hidden">
        <div className="w-[3914px] h-[2282px] rounded-[32px] bg-black shadow-[0_0_50px_rgba(0,0,0,0.3)] overflow-hidden flex flex-col">
          {/* title bar */}
          <div className="h-[66px] bg-[#1e1e1e] flex items-center shrink-0 border-t border-[#8a8a8a] text-[21px] leading-none">
            <div className="w-[1000px] flex items-center pl-[18px] shrink-0">
              <div className="w-[23px] h-[23px] rounded-full bg-[#ff3b57] flex items-center justify-center"><div className="w-[7px] h-[7px] rounded-full bg-[#8f1d2c]" /></div>
              <div className="w-[23px] h-[23px] rounded-full bg-[#ffc400] ml-[14px]" />
              <div className="w-[23px] h-[23px] rounded-full bg-[#00c23f] ml-[15px]" />
              <div className="ml-[78px]"><svg width="28" height="30" viewBox="0 0 24 24" fill="currentColor"><path d="M12 1l10 12h-3.500v10H14v-7h-4v7H5.500V13H2z" /></svg></div>
              <span className="ml-[50px] w-[104px]">Import</span>
              <div className="w-[60px] h-[66px] relative flex items-center gap-[8px] text-[#e0e0e0]">
                <span>Edit</span><ChevD s={14} />
                <div className="absolute left-0 right-0 top-[49px] h-[3px] rounded bg-[#d8d8d8]" />
              </div>
              <span className="ml-[40px] w-[90px]">Color</span>
              <span>Export</span>
            </div>
            <div className="flex-1 text-center pl-[10px] text-[#cfcfcf] whitespace-nowrap">Generate Music - Edited</div>
            <div className="w-[1000px] flex items-center justify-end pr-[23px] shrink-0">
              {topIcons.map((ic) => <div key={ic.key} className="w-[71px] flex justify-center">{ic}</div>)}
              <div className="w-[71px] flex justify-center">
                <svg width="36" height="36" viewBox="0 0 36 36"><circle cx="18" cy="18" r="18" fill="#00c4f5" /><path d="M18 18h13a18 18 0 00-6-14L18 4z" fill="#0a9fd0" /></svg>
              </div>
            </div>
          </div>
          <div className="h-[2px] shrink-0" />
          {/* upper panels */}
          <div className="flex h-[1107px] shrink-0">
            <ProjectPanel />
            <ProgramPanel />
            <PropertiesPanel />
          </div>
          <div className="h-[6.500px] shrink-0" />
          {/* timeline row */}
          <div className="flex h-[1065px] shrink-0">
            <Tools />
            <Timeline />
            <Meters />
          </div>
          <div className="h-[3px] shrink-0" />
          {/* footer */}
          <div className="flex-1 bg-[#1e1e1f] flex items-center justify-end pr-[24px]">
            <svg width="28" height="28" viewBox="0 0 24 24" fill="none" stroke="currentColor" strokeWidth="1.500"><circle cx="12" cy="12" r="10" /><path d="M12 10.500v7M10 17.500h4M10 10.500h2" strokeWidth="2" /><circle cx="12" cy="7" r="1.200" fill="currentColor" stroke="none" /></svg>
          </div>
        </div>
      </div>
    </div>
  );
}
